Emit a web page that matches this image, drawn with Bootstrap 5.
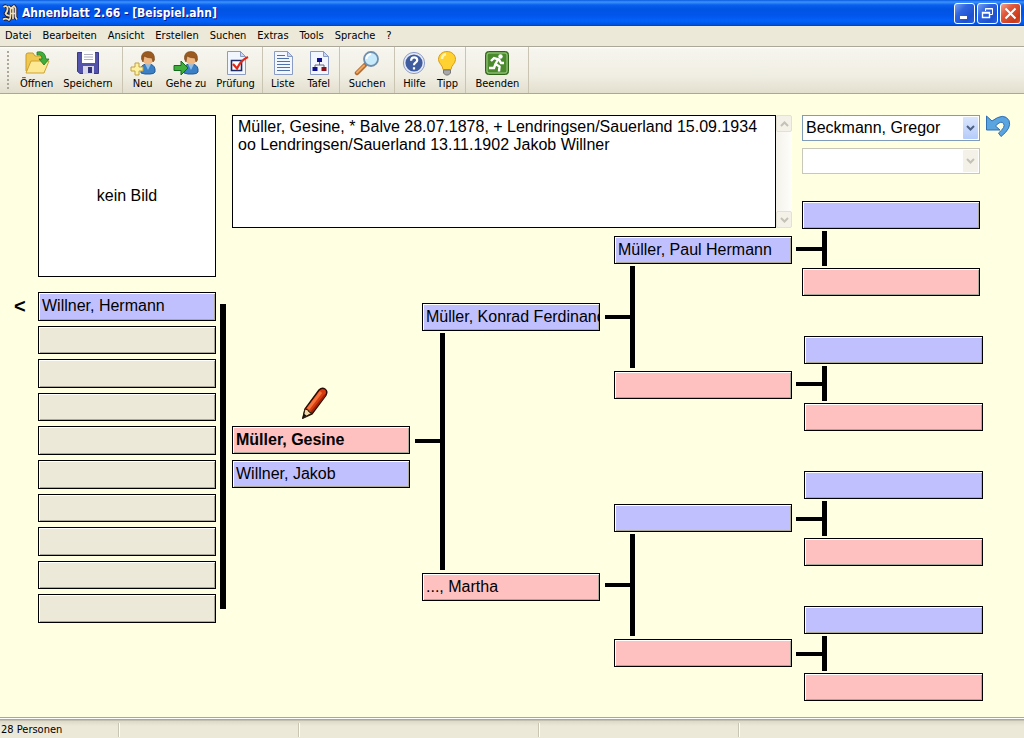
<!DOCTYPE html>
<html lang="de">
<head>
<meta charset="utf-8">
<meta name="viewport" content="width=device-width, initial-scale=1">
<title>Ahnenblatt 2.66 - [Beispiel.ahn]</title>
<link rel="stylesheet" href="https://cdn.jsdelivr.net/npm/bootstrap@5.3.0/dist/css/bootstrap.min.css">
<style>
  :root { --face: #ece9d8; --paper: #ffffe1; --male: #c0c0ff; --female: #ffc0c0; }
  body { background: var(--paper); color: #000; font: 11px/14px "DejaVu Sans Condensed", "DejaVu Sans", sans-serif; }
  svg { display: block; flex: none; }

  .titlebar { height: 26px; padding: 0 3px 0 2px; background: linear-gradient(#0a5ae0 0, #3a94fb 2px, #0a5fee 5px, #0054e3 9px, #0355ea 15px, #0262fb 21px, #0050d8 25px, #003fb5 26px); }
  .titlebar h1 { font-size: 12px; line-height: 16px; font-weight: 700; color: #fff; text-shadow: 1px 1px 0 #0a1883; }
  .winbtn { width: 21px; height: 21px; padding: 0; border: 1px solid #fff; border-radius: 3px; background: linear-gradient(135deg, #7ba2f0, #2f66e0 35%, #1c50d0 75%, #2a62e0); display: grid; place-items: center; }
  .winbtn-close { background: linear-gradient(135deg, #f0a58f, #e0593a 35%, #c8391a 80%, #d85535); }

  .menubar { height: 20px; padding: 0 5px; gap: 11px; background: var(--face); }
  .menubar a { color: #000; text-decoration: none; }

  .toolstrip { height: 48px; padding: 0 7px; border-top: 1px solid #aca899; border-bottom: 1px solid #aca899; background: linear-gradient(#fff 0, #f6f5ee 2px, #f1efe4 60%, #e3dfcf); }
  .grip { width: 2px; height: 38px; margin-right: 2px; background: repeating-linear-gradient(#aca899 0 2px, transparent 2px 4px); }
  .toolset { padding: 3px 2px 0 2px; border-right: 1px solid #c9c5b2; }
  .toolset:first-of-type, .toolset-wide { padding-left: 4px; padding-right: 4px; }
  .tool { border: 0; padding: 0 5px; background: none; display: flex; flex-direction: column; align-items: center; gap: 1px; color: #000; white-space: nowrap; }

  .workspace { display: grid; grid-template-columns: minmax(0, 232fr) minmax(0, 564fr) minmax(0, 228fr); padding-top: 21px; font: 16px/18px "Liberation Sans", Arial, sans-serif; }
  .family { display: grid; grid-template-columns: 38px minmax(0, 1fr) 16px; grid-template-rows: 162px 331px; row-gap: 15px; }
  .photo { grid-column: 2; border: 1px solid #000; background: #fff; }
  .back { grid-column: 1; align-self: start; height: 28px; padding: 0 0 0 14px; border: 0; background: none; text-align: left; font-size: 20px; line-height: 28px; font-weight: 700; }
  .children { display: grid; grid-auto-rows: 1fr; gap: 5px; }
  .trunk { width: 6px; margin: 12px 0 14px 4px; background: #000; }

  .person { display: block; width: 100%; height: 28px; padding: 0 3px; border: 1px solid #000; border-radius: 0; text-align: left; white-space: nowrap; overflow: hidden; color: #000; background: var(--face); box-shadow: inset 1px 1px 0 #fff, inset -1px -1px 0 #aca899; }
  .children .person { height: auto; }
  .male { background: var(--male); }
  .female { background: var(--female); }

  .memo { height: 113px; }
  .memo textarea { resize: none; overflow: hidden; border: 1px solid #000; padding: 2px 5px; background: #fff; }
  .scroller { width: 16px; background: linear-gradient(90deg, #f4f2ea, #fefefb); }
  .scroller button { width: 16px; height: 17px; padding: 0; border: 1px solid #e4e1d2; border-radius: 2px; background: #f3f1e8; display: grid; place-items: center; }

  .tree { display: grid; grid-template-columns: minmax(0, 178fr) minmax(0, 185fr) minmax(0, 187fr); column-gap: 5px; padding: 8px 4px 0 0; }
  .proband { padding-top: 151px; }
  .edit { padding: 0; border: 0; margin: 0 0 7px 69px; background: none; }
  .proband .person + .person { margin-top: 6px; }

  .gen2 .person { margin-left: 7px; width: calc(100% - 7px); }
  .gen3 .person { margin-left: 9px; width: calc(100% - 9px); }
  .gen4 .person { margin-left: 8px; width: calc(100% - 8px); }
  .gen4 .pair-top .person { margin-left: 6px; width: calc(100% - 9px); }
  .joint { display: flex; align-items: center; padding: 2px 0 3px; }
  .joint::before { content: ""; width: 25px; height: 4px; background: #000; }
  .joint::after { content: ""; width: 5px; align-self: stretch; background: #000; }
  .gen2 .joint { height: 242px; }
  .gen2 .joint::before { margin-bottom: 20px; }
  .gen3 .joint { height: 107px; }
  .gen3 { display: grid; gap: 105px; align-content: start; }
  .gen4 .joint { height: 39px; padding: 2px 0; }
  .gen4 .joint::before { width: 26px; }
  .gen4 { display: grid; gap: 40px; margin: 27px 41px 0 0; }

  .pickers { padding: 0 10px 0 6px; display: grid; grid-template-columns: minmax(0, 1fr) 30px; gap: 7px 4px; }
  .picker { position: relative; height: 26px; }
  .picker select { appearance: none; width: 100%; height: 100%; padding: 0 18px 0 3px; border: 1px solid #7f9db9; border-radius: 0; background: #fff; color: #000; opacity: 1; }
  .picker span { position: absolute; top: 2px; right: 2px; bottom: 2px; width: 15px; display: grid; place-items: center; border-radius: 1px; background: linear-gradient(#dbe6fe, #b4cbfa); pointer-events: none; }
  .picker select:disabled { border-color: #c9c7ba; }
  .picker select:disabled + span { background: #f3f1e8; }
  .undo { padding: 0; border: 0; background: none; align-self: start; height: 26px; }

  .statusline { height: 21px; background: linear-gradient(#aca899 0 1px, #fff 1px 2px, #aca899 2px 3px, #dcd9c8 4px, #ece9d8 9px, #ece9d8); padding-top: 6px; }
  .pane { height: 14px; padding-left: 1px; border-right: 1px solid #c9c5b2; box-shadow: 1px 0 0 #fff; }
</style>
</head>
<body class="d-flex flex-column min-vh-100">

<header>
  <div class="titlebar d-flex align-items-center">
    <svg width="16" height="18" viewBox="0 0 16 18" fill="none" stroke="#1a1a40" stroke-width="3.500" stroke-linejoin="round"><g id="crest"><path d="M1.500 3Q4 1 5.500 3.500Q6 7 3.500 9.500Q5 12 7.500 11.500M1 15.500Q4 13.500 7 16Q8.500 15 8.500 12V4L6.500 2M8.500 5L12 2L13.500 4V13L15 15.500M8.500 9.500H13M11 4V15"/></g><use href="#crest" stroke="#efe0b4" stroke-width="1.700"/></svg>
    <h1 class="mb-0 ms-1 me-auto text-nowrap">Ahnenblatt 2.66 - [Beispiel.ahn]</h1>
    <div class="d-flex" style="gap:2px">
      <button class="winbtn" aria-label="Minimieren"><svg width="15" height="15"><path d="M3 11.500h7" stroke="#fff" stroke-width="3"/></svg></button>
      <button class="winbtn" aria-label="Wiederherstellen"><svg width="15" height="15" fill="none" stroke="#fff"><path d="M5.500 5V2.500h7v6H10M5 3h8"/><path d="M2.500 6.500h7v5h-7zM2 7h8" stroke-width="1.400"/></svg></button>
      <button class="winbtn winbtn-close" aria-label="Schließen"><svg width="15" height="15"><path d="M2.500 2.500l10 10M12.500 2.500l-10 10" stroke="#fff" stroke-width="2"/></svg></button>
    </div>
  </div>

  <nav class="menubar d-flex align-items-center">
    <a href="#">Datei</a><a href="#">Bearbeiten</a><a href="#">Ansicht</a><a href="#">Erstellen</a><a href="#">Suchen</a><a href="#">Extras</a><a href="#">Tools</a><a href="#">Sprache</a><a href="#">?</a>
  </nav>

  <div class="toolstrip d-flex" role="toolbar">
    <div class="grip align-self-center"></div>
    <div class="toolset toolset-wide d-flex">
      <button class="tool"><svg width="26" height="26" viewBox="0 0 26 26"><path d="M2 21V5q0-2 2-2h5l2 3h8v15z" fill="#f0c850" stroke="#c79a28"/><path d="M2 23L7 11h18l-5 12z" fill="#fde893" stroke="#cda235"/><path d="M13 2q8-2 9 7h3l-5 6-5-6h3q0-5-5-4z" fill="#3fae3a" stroke="#1d7a22" stroke-width=".8"/></svg>Öffnen</button>
      <button class="tool"><svg width="26" height="26" viewBox="0 0 26 26"><path d="M2.500 2.500h21v21H5l-2.500-2z" fill="#5353ac" stroke="#393987"/><path d="M7 1h13v12H7z" fill="#fff"/><path d="M9 4.500h9M9 7h9M9 9.500h9" stroke="#b0b0c0"/><path d="M8 16h11v8H8z" fill="#d8d8e8"/><path d="M13 17h4v6h-4z" fill="#34347e"/></svg>Speichern</button>
    </div>
    <div class="toolset d-flex">
      <button class="tool"><svg width="26" height="26" viewBox="0 0 26 26"><g id="user"><path d="M11 23V18q1-4 7-4t7 5v3q-1 2-5 2h-5z" fill="#3b7fc4" stroke="#245a98"/><path d="M15 14l3 6 3-6z" fill="#8ec0ea"/><circle cx="18" cy="9" r="5.500" fill="#f0b884"/><path d="M11.500 9Q11 1.500 18 1.500T24.500 10l-1.500 2-1-4q-5 0-8-2l-1 6z" fill="#9a5a20" stroke="#74400f" stroke-width=".6"/></g><path d="M4 13h4v4h4v4H8v4H4v-4H0v-4h4z" transform="translate(1)" fill="#fdf0a0" stroke="#c0a040"/></svg>Neu</button>
      <button class="tool"><svg width="26" height="26" viewBox="0 0 26 26"><use href="#user"/><path d="M1 15.500h7V11l7 7-7 7v-4.500H1z" fill="#3fae3a" stroke="#156b1c"/></svg>Gehe zu</button>
      <button class="tool"><svg width="26" height="26" viewBox="0 0 26 26"><path id="sheet" d="M4.500 1.500h13l5 5v18h-18z" fill="#f2f6ff" stroke="#8a9cc4"/><path d="M17.500 1.500v5h5z" fill="#c9d8f0" stroke="#8a9cc4"/><path d="M8.500 10.500h10v10h-10z" fill="#fff" stroke="#1c2b66" stroke-width="1.600"/><path d="M10 14l4 4.500Q18 10 25 7" fill="none" stroke="#e02818" stroke-width="2.200"/></svg>Prüfung</button>
    </div>
    <div class="toolset d-flex">
      <button class="tool"><svg width="26" height="26" viewBox="0 0 26 26"><use href="#sheet"/><path d="M17.500 1.500v5h5z" fill="#c9d8f0" stroke="#8a9cc4"/><path d="M7 5.500h8M7 8.500h12M7 11.500h13M7 14.500h13M7 17.500h13M7 20.500h13" stroke="#5070a8"/></svg>Liste</button>
      <button class="tool"><svg width="26" height="26" viewBox="0 0 26 26"><use href="#sheet"/><path d="M17.500 1.500v5h5z" fill="#c9d8f0" stroke="#8a9cc4"/><path d="M13.500 11v4M9 18v-3h9v3" fill="none" stroke="#667"/><path d="M11 8h5v4h-5zM6.500 17h5v4h-5z" fill="#10108c"/><path d="M15.500 17h5v4h-5z" fill="#8c1018"/></svg>Tafel</button>
    </div>
    <div class="toolset toolset-wide d-flex">
      <button class="tool"><svg width="26" height="26" viewBox="0 0 26 26"><path d="M3 23l8-8" stroke="#b06a30" stroke-width="4.500" stroke-linecap="round"/><path d="M3 22.500l7-7" stroke="#f0a860" stroke-width="2" stroke-linecap="round"/><circle cx="17" cy="9" r="7" fill="#c8ebfb" stroke="#6f8fae" stroke-width="1.800"/><path d="M12.500 9q0-4 4.500-5" fill="none" stroke="#fff" stroke-width="2"/></svg>Suchen</button>
    </div>
    <div class="toolset d-flex">
      <button class="tool"><svg width="24" height="26" viewBox="0 0 26 26"><circle cx="13" cy="13" r="11.500" fill="#e4e9f5" stroke="#8496c4"/><circle cx="13" cy="13" r="9.300" fill="#3f5c9e"/><path d="M9.800 10.500q.2-3.500 3.400-3.500t3.300 3q0 1.500-1.800 2.600t-1.700 2.900M13 17.500v2.500" fill="none" stroke="#fff" stroke-width="2.400"/></svg>Hilfe</button>
      <button class="tool"><svg width="22" height="26" viewBox="0 0 22 26"><path d="M11 1.500c5 0 8.500 3.500 8.500 8 0 4-4.500 6-4.500 10H7c0-4-4.500-6-4.500-10 0-4.500 3.500-8 8.500-8z" fill="#ffd232" stroke="#d89c18"/><path d="M6 9q0-4 4-5" fill="none" stroke="#fff6b8" stroke-width="2.500"/><path d="M7.500 20h7v3l-2 2h-3l-2-2z" fill="#a8a8a8" stroke="#777"/></svg>Tipp</button>
    </div>
    <div class="toolset toolset-wide d-flex">
      <button class="tool"><svg width="26" height="26" viewBox="0 0 26 26"><rect x="1.500" y="1.500" width="23" height="23" rx="3" fill="#4a8a2c" stroke="#2f6418"/><rect x="3" y="3" width="20" height="20" rx="2" fill="none" stroke="#a5cf8c"/><circle cx="16.500" cy="6.500" r="2.200" fill="#fff"/><path d="M7 11l3-3 5 1.500 2 3.500h3M14 9.500L11.500 14l4 2.500-.5 5M11.500 14L10 18H5" fill="none" stroke="#fff" stroke-width="2.400"/></svg>Beenden</button>
    </div>
  </div>
</header>

<main class="workspace flex-grow-1">
  <section class="family align-content-start">
    <div class="photo d-flex align-items-center justify-content-center">kein Bild</div>
    <button class="back" aria-label="Zurück">&lt;</button>
    <div class="children">
      <button class="person male">Willner, Hermann</button>
      <button class="person" aria-label="Kind 2"></button>
      <button class="person" aria-label="Kind 3"></button>
      <button class="person" aria-label="Kind 4"></button>
      <button class="person" aria-label="Kind 5"></button>
      <button class="person" aria-label="Kind 6"></button>
      <button class="person" aria-label="Kind 7"></button>
      <button class="person" aria-label="Kind 8"></button>
      <button class="person" aria-label="Kind 9"></button>
      <button class="person" aria-label="Kind 10"></button>
    </div>
    <div class="trunk"></div>
  </section>

  <section>
    <div class="memo d-flex pe-1">
      <textarea class="flex-grow-1" readonly aria-label="Personendaten">Müller, Gesine, * Balve 28.07.1878, + Lendringsen/Sauerland 15.09.1934
oo Lendringsen/Sauerland 13.11.1902 Jakob Willner</textarea>
      <div class="scroller d-flex flex-column justify-content-between">
        <button disabled aria-label="Nach oben"><svg width="9" height="6" fill="none" stroke="#c4c2b6" stroke-width="2"><path d="M1 5l3.500-3.500L8 5"/></svg></button>
        <button disabled aria-label="Nach unten"><svg width="9" height="6" fill="none" stroke="#c4c2b6" stroke-width="2"><path d="M1 1l3.500 3.500L8 1"/></svg></button>
      </div>
    </div>
    <div class="tree">
      <div class="proband">
        <button class="edit" aria-label="Bearbeiten"><svg width="28" height="32" viewBox="0 0 28 32"><path d="M2 31L4 22 18 3q3-3 6-1t1 6L11 27z" fill="#d63c10" stroke="#2a0c04" stroke-width="1.500"/><path d="M7 22L20 5" stroke="#f5713a" stroke-width="3"/><path d="M10.500 25L24 8" stroke="#9c2206" stroke-width="2"/><path d="M2 31l2-9 3 1 1 2 3 1z" fill="#f0d8a8" stroke="#2a1c08"/><path d="M1.500 31.500l1-5 3 2z" fill="#111"/></svg></button>
        <button class="person female fw-bold">Müller, Gesine</button>
        <button class="person male">Willner, Jakob</button>
      </div>
      <div class="gen2 align-self-center">
        <button class="person male">Müller, Konrad Ferdinand</button>
        <div class="joint"></div>
        <button class="person female">..., Martha</button>
      </div>
      <div class="gen3">
        <div>
          <button class="person male">Müller, Paul Hermann</button>
          <div class="joint"></div>
          <button class="person female" aria-label="Großmutter"></button>
        </div>
        <div>
          <button class="person male" aria-label="Großvater"></button>
          <div class="joint"></div>
          <button class="person female" aria-label="Großmutter"></button>
        </div>
      </div>
    </div>
  </section>

  <section>
    <div class="pickers">
      <div class="picker"><select aria-label="Person"><option>Beckmann, Gregor</option></select><span><svg width="9" height="6" fill="none" stroke="#4d6185" stroke-width="2"><path d="M1 1l3.500 3.500L8 1"/></svg></span></div>
      <button class="undo" aria-label="Rückgängig"><svg width="28" height="26" viewBox="0 0 28 26"><path d="M2.500 1V15H16L11.500 11Q17 5 19.500 8.500T14.500 18L17 21.500Q28 13 25 5.500Q20-3 8 6Z" fill="#5aa4e0" stroke="#2f6fb4"/></svg></button>
      <div class="picker"><select disabled aria-label="Partner"></select><span><svg width="9" height="6" fill="none" stroke="#c4c2b6" stroke-width="2"><path d="M1 1l3.500 3.500L8 1"/></svg></span></div>
    </div>
    <div class="gen4">
      <div class="pair-top">
        <button class="person male" aria-label="Urgroßvater 1"></button>
        <div class="joint"></div>
        <button class="person female" aria-label="Urgroßmutter 1"></button>
      </div>
      <div>
        <button class="person male" aria-label="Urgroßvater 2"></button>
        <div class="joint"></div>
        <button class="person female" aria-label="Urgroßmutter 2"></button>
      </div>
      <div>
        <button class="person male" aria-label="Urgroßvater 3"></button>
        <div class="joint"></div>
        <button class="person female" aria-label="Urgroßmutter 3"></button>
      </div>
      <div>
        <button class="person male" aria-label="Urgroßvater 4"></button>
        <div class="joint"></div>
        <button class="person female" aria-label="Urgroßmutter 4"></button>
      </div>
    </div>
  </section>
</main>

<footer class="statusline d-flex">
  <div class="pane" style="width:119px">28 Personen</div>
  <div class="pane" style="width:180px"></div>
  <div class="pane" style="width:240px"></div>
  <div class="pane" style="width:200px"></div>
</footer>

<script src="https://cdn.jsdelivr.net/npm/bootstrap@5.3.0/dist/js/bootstrap.bundle.min.js"></script>
</body>
</html>
